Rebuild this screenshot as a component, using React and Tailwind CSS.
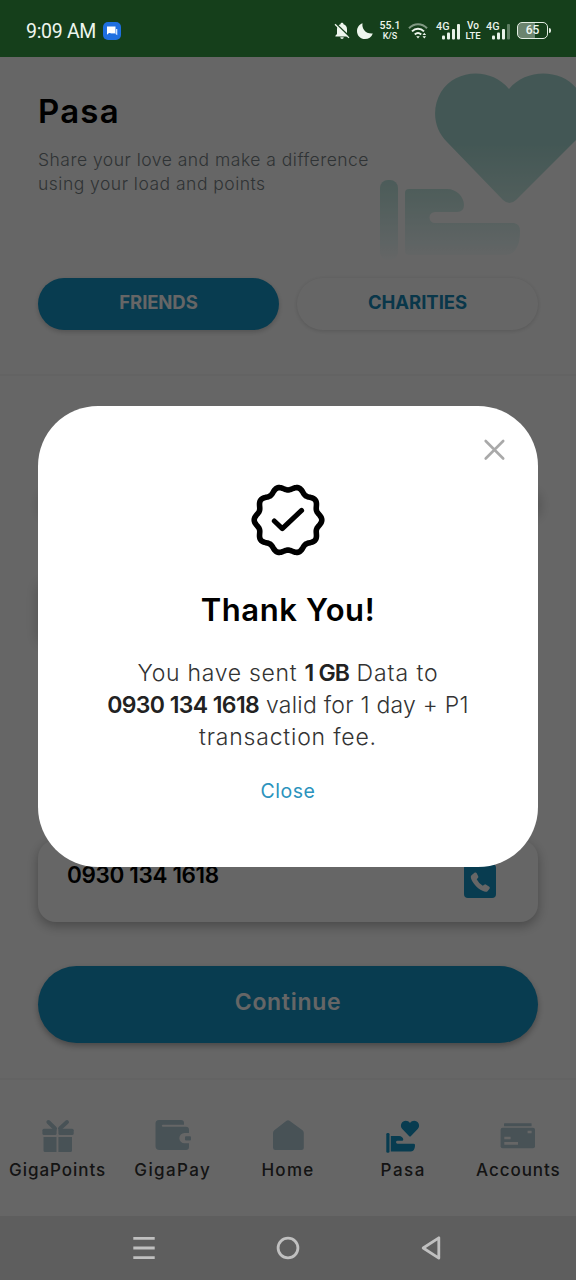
import React from 'react';

// Sceau dentelé à dix lobes autour de la coche
const sealPoints = Array.from({ length: 180 }, (_, i) => {
    const a = (i / 180) * Math.PI * 2;
    const r = 31.9 + 1.9 * Math.cos(10 * a);
    return `${(38 + r * Math.cos(a)).toFixed(2)},${(38 + r * Math.sin(a)).toFixed(2)}`;
}).join(' ');

const SealIcon = () => (
    <svg viewBox="0 0 76 76" className="w-[76px] h-[76px]" fill="none" stroke="#000" strokeLinecap="round" strokeLinejoin="round">
        <polygon points={sealPoints} strokeWidth="5.6" />
        <path d="M24.3 39L32.3 46.6L51.6 28.4" strokeWidth="5" />
    </svg>
);

const Signal = ({ weak }) => (
    <svg viewBox="0 0 24 20" className="w-6 h-5 overflow-visible" fill="#e9f3e9">
        <text x="-1" y="9" fontSize="11" fontWeight="500" fontFamily="Roboto, sans-serif" textLength="13.5" lengthAdjust="spacingAndGlyphs">4G</text>
        <rect x="5" y="14.5" width="3" height="4" rx="1" />
        <rect x="10" y="11.5" width="3" height="7" rx="1" />
        <rect x="15" y="8" width="3" height="10.5" rx="1" />
        <rect x="20" y="3" width="3" height="15.5" rx="1" opacity={weak ? 0.35 : 1} />
    </svg>
);

const StatusBar = () => (
    <div className="h-[57px] shrink-0 bg-[#153f1b] text-[#eef6ee] font-[Roboto,sans-serif] flex items-center justify-between pl-[26px] pr-[25px] pt-1">
        <div className="flex items-center gap-[7px]">
            <span className="text-[19.5px] leading-6 tracking-[-0.3px] pt-[2px]">9:09 AM</span>
            <svg viewBox="0 0 18 18" className="w-[18px] h-[18px]">
                <rect width="18" height="18" rx="5" fill="#1f6fe0" />
                <path d="M4 4.5H12.5V11H6L4 12.7Z" fill="#fff" />
                <path d="M13 7H14.3V13.3L12.5 12H7.5V11.4H13Z" fill="#d6e6ff" />
            </svg>
        </div>
        <div className="flex items-center">
            <svg viewBox="0 0 16 18" className="w-4 h-[18px]" fill="#eef6ee">
                <path d="M8 .8c.9 0 1.5.6 1.5 1.4C12 3 13 4.8 13 7.3V12l1.6 1.8V14.5H1.4V13.8L3 12V7.3C3 4.8 4 3 6.5 2.2C6.5 1.4 7.1.8 8 .8Z" />
                <path d="M6.3 15.3H9.7C9.7 17.5 6.3 17.5 6.3 15.3Z" />
                <path d="M1.8 1.5L15.8 15" stroke="#153f1b" strokeWidth="1.6" />
                <path d="M1 2.2L15 15.9" stroke="#eef6ee" strokeWidth="1.3" />
            </svg>
            <svg viewBox="0 0 18 18" className="w-[18px] h-[18px] ml-[6px]" fill="#eef6ee">
                <path d="M6.5 1.2C5.6 6.8 9.5 12 16.8 11.4C15.5 15 12.5 17 9 17C4.5 17 1 13.6 1 9.2C1 5.5 3.2 2.3 6.5 1.2Z" />
            </svg>
            <div className="ml-[5px] mr-[2px] w-[22px] text-center font-medium">
                <div className="text-[10.5px] leading-[10px]">55.1</div>
                <div className="text-[9px] leading-[10px]">K/S</div>
            </div>
            <svg viewBox="0 0 20 18" className="w-5 h-[18px] ml-[5px]" fill="none" stroke="#eef6ee" strokeWidth="2">
                <path d="M1 6.3C6.2.9 13.8.9 19 6.3" opacity="0.5" />
                <path d="M4 9.4C7.5 6 12.5 6 16 9.4" />
                <path d="M6.8 12.5C8.7 10.7 11.3 10.7 13.2 12.5" />
                <path d="M8.2 14.3H11.8L10 16.5Z" fill="#eef6ee" stroke="none" />
                <path d="M14.5 13L16.3 10.8L18.1 13ZM14.5 14.3L16.3 16.5L18.1 14.3Z" fill="#eef6ee" stroke="none" />
            </svg>
            <div className="ml-[9px]"><Signal /></div>
            <div className="ml-[3px] w-[18px] text-center font-medium">
                <div className="text-[10px] leading-[11px]">Vo</div>
                <div className="text-[9.5px] leading-[10px]">LTE</div>
            </div>
            <div className="ml-[5px]"><Signal weak /></div>
            <div className="ml-[6px] flex items-center">
                <div className="w-[31px] h-[17px] rounded-[5px] border-[1.5px] border-[#e3eee3] bg-linear-to-r from-[#6b846e] from-60% to-[#153f1b] to-60% text-[12px] leading-[14.5px] font-medium text-center">65</div>
                <div className="w-[2px] h-[5px] ml-px bg-[#e3eee3] rounded-r" />
            </div>
        </div>
    </div>
);

const HeartHand = () => (
    <svg viewBox="376 57 200 220" className="w-[200px] h-[220px] shrink-0" fill="url(#fade)">
        <defs>
            <linearGradient id="fade" gradientUnits="userSpaceOnUse" x1="0" y1="145" x2="0" y2="262">
                <stop offset="0" stopColor="#a9dad4" />
                <stop offset="0.45" stopColor="#c9ebe5" />
                <stop offset="0.85" stopColor="#edfafa" />
                <stop offset="1" stopColor="#ffffff" />
            </linearGradient>
        </defs>
        <path d="M509 89C491 67 455 69 441 92C431 109 434 129 447 142L503 200Q509.5 206 516 200L574 142C588 128 591 109 579 92C565 69 527 67 509 89Z" />
        <rect x="380" y="180" width="18" height="80" rx="8" />
        <path d="M405 193Q405 189 409 189H447C457 189 464 197 464 205Q464 212 457 212H435A5.5 5.5 0 0 0 435 223H514Q520 224 520 231C520 246 515 255 505 255H409Q405 255 405 251Z" />
    </svg>
);

const tabs = [
    {
        label: 'GigaPoints',
        spacing: 'tracking-[0.95px]',
        icon: (
            <g fill="#b3ccd8">
                <path d="M8.4 4L15 10.5M27 4L20 10.5" stroke="#b3ccd8" strokeWidth="4" strokeLinecap="round" />
                <rect x="2.4" y="10.7" width="14.2" height="6.3" rx="1.5" />
                <rect x="18.4" y="10.7" width="15.3" height="6.3" rx="1.5" />
                <path d="M3.5 19H16.5V34H5Q3.5 34 3.5 32.5ZM18.4 19H32V32.5Q32 34 30.5 34H18.4Z" />
            </g>
        ),
    },
    {
        label: 'GigaPay',
        spacing: 'tracking-[1.4px]',
        icon: (
            <g fill="#b3ccd8">
                <path d="M4 2H26Q29 2 29 5V6.7H7.5Q6 7.7 7.5 8.7H31Q34 8.7 34 12V15H29.5A5 5 0 0 0 29.5 25.3H34V29Q34 32 31 32H4.5Q.5 32 .5 28V5.5Q.5 2 4 2Z" />
                <rect x="30" y="18.2" width="6" height="4.4" rx="1" />
            </g>
        ),
    },
    {
        label: 'Home',
        spacing: 'tracking-[1.3px]',
        icon: <path d="M16.5 2.8Q18 1.5 19.5 2.8L32.5 12.2Q33.8 13.2 33.8 15V29.5Q33.8 32 31.3 32H5.3Q3 32 3 29.5V15Q3 13.2 4.3 12.2Z" fill="#b3ccd8" />,
    },
    {
        label: 'Pasa',
        spacing: 'tracking-[1.5px]',
        icon: (
            <g fill="#1496c8">
                <path d="M25 5C22.8 1.8 18 2.3 16.4 5.4C15.5 7.3 15.8 9.3 17.3 10.9L24 18Q25 19 26 18L32.7 10.9C34.2 9.3 34.5 7.3 33.6 5.4C32 2.3 27.2 1.8 25 5Z" />
                <rect x="1.3" y="15" width="3.2" height="19.7" rx="1.3" />
                <path d="M5.8 18H14C16.5 18 18.3 20 18.3 21.4Q18.3 22.8 17 22.8H12.5A1.3 1.3 0 0 0 12.5 25.7H28.5Q30 25.7 30 27C30 31 28.5 33.4 26 33.4H5.8Z" />
            </g>
        ),
    },
    {
        label: 'Accounts',
        spacing: 'tracking-[0.95px]',
        icon: (
            <g fill="#b3ccd8">
                <rect x="4" y="5.3" width="27.6" height="3" rx="0.5" />
                <rect x="0.6" y="9.7" width="34.4" height="20.5" rx="2" />
                <path d="M27.6 12.7H31.6V15.3H27.6ZM4.3 18.7H10.6V21.3H4.3ZM4.3 24H18V26.7H4.3Z" fill="#fff" />
            </g>
        ),
    },
];

const Header = () => (
    <div className="h-[319px] shrink-0 border-b-2 border-[#f7f7f7]">
        <div className="h-[221px] flex pl-[38px]">
            <div className="w-[338px] shrink-0 pt-[33px]">
                <h1 className="text-[33px] leading-[42px] font-semibold tracking-[1.2px]">Pasa</h1>
                <p className="mt-4 text-[17.5px] leading-6 font-light text-[#777f84] tracking-[0.49px] whitespace-nowrap">
                    Share your love and make a difference
                    <br />
                    using your load and points
                </p>
            </div>
            <HeartHand />
        </div>
        <div className="flex gap-[18px] px-[38px] text-[18.5px] font-bold text-center leading-[49px]">
            <button className="w-[241px] h-[52px] pb-[3px] rounded-full bg-[#1496c8] text-white shadow-[0_2px_5px_rgba(0,0,0,0.2)] tracking-[-0.1px]">FRIENDS</button>
            <button className="w-[241px] h-[52px] pb-[3px] rounded-full bg-white text-[#1889b8] shadow-[0_1px_4px_rgba(0,0,0,0.15)] tracking-[-0.05px]">CHARITIES</button>
        </div>
    </div>
);

const Dialog = () => (
    <div className="relative w-[500px] h-[461px] bg-white rounded-[60px] flex flex-col items-center pt-[76px] text-center">
        <button className="absolute right-[32px] top-[32px]">
            <svg viewBox="0 0 24 24" className="w-6 h-6" stroke="#a9a9a9" strokeWidth="2.6" strokeLinecap="round">
                <path d="M3.7 3L21.2 20.5M21.2 3L3.7 20.5" />
            </svg>
        </button>
        <SealIcon />
        <h2 className="mt-[32px] text-[31px] leading-10 font-semibold text-black tracking-[0.6px]">Thank You!</h2>
        <p className="mt-[27px] text-[23px] leading-8 font-light text-[#333] whitespace-nowrap">
            <span className="tracking-[0.7px]">You have sent </span>
            <b className="font-semibold text-[#222] tracking-[-0.8px]">1 GB</b>
            <span className="tracking-[0.9px]"> Data to</span>
            <br />
            <b className="font-semibold text-[#222] tracking-[-0.6px]">0930 134 1618</b>
            <span className="tracking-[0.25px]"> valid for 1 day + P1</span>
            <br />
            <span className="tracking-[0.8px]">transaction fee.</span>
        </p>
        <button className="mt-[22px] text-[19.5px] leading-8 text-[#2b93bd] tracking-[0.5px]">Close</button>
    </div>
);

const App = () => {
    return (
        <div className="w-[576px] h-[1280px] flex flex-col overflow-hidden font-[Inter,sans-serif] bg-white text-black">
            <StatusBar />
            <div className="relative h-[1159px] flex flex-col">
                <Header />

                {/* Formulaire derrière la fenêtre */}
                <div className="h-[702px] shrink-0 px-[38px] pt-[114px] flex flex-col">
                    <div className="h-[26px] rounded-lg bg-white shadow-[2px_2px_12px_rgba(0,0,0,0.2)]" />
                    <div className="mt-[66px] h-[62px] w-[240px] rounded-lg bg-white shadow-[0_0_14px_rgba(0,0,0,0.2)]" />
                    <div className="mt-[196px] h-[82px] shrink-0 rounded-[18px] bg-white shadow-[0_4px_12px_rgba(0,0,0,0.3)] flex items-end justify-between pl-[29px] pr-[42px] pb-6">
                        <span className="text-[22.5px] leading-[46px] font-semibold tracking-[-0.35px]">0930 134 1618</span>
                        <svg viewBox="0 0 32 34" className="w-8 h-[34px]">
                            <rect width="32" height="34" rx="4" fill="#1496c8" />
                            <path d="M7.5 11.2L10.8 8.6Q12 8 12.7 9.2L14.3 12.5Q14.6 13.5 13.4 14.5L12.7 15.2Q14.8 19.5 18.8 21.7L20.2 20.7Q21.3 20 22.2 20.7L25.3 22.8Q26.3 23.7 25.5 24.7L23.5 27.2Q22 28.5 18.5 26.8C13 24.2 8.5 19 6.9 14Q6.5 12 7.5 11.2Z" fill="#fff" />
                        </svg>
                    </div>
                    <button className="mt-[44px] h-[77px] shrink-0 pb-[5px] rounded-full bg-[#1496c8] text-white text-[23px] font-semibold tracking-[0.7px] shadow-[0_3px_6px_rgba(0,0,0,0.3)]">Continue</button>
                </div>

                {/* Barre d'onglets */}
                <div className="h-[138px] shrink-0 border-t-2 border-[#f7f7f7] grid grid-cols-5 pt-[38px]">
                    {tabs.map((tab) => (
                        <div key={tab.label} className="flex flex-col items-center">
                            <svg viewBox="0 0 36 36" className="w-9 h-9">{tab.icon}</svg>
                            <span className={`mt-1 text-[17px] leading-6 font-medium text-[#333] ${tab.spacing}`}>{tab.label}</span>
                        </div>
                    ))}
                </div>

                {/* Voile sombre et fenêtre de confirmation */}
                <div className="absolute inset-0 bg-black/60 flex flex-col items-center pt-[349px]">
                    <Dialog />
                </div>
            </div>

            <div className="h-16 shrink-0 bg-[#5e5e5e] flex items-center justify-between px-[132px]">
                <svg viewBox="0 0 24 24" className="w-6 h-6" stroke="#c0c0c0" strokeWidth="2.8">
                    <path d="M1.3 2.4H22.7M1.3 12H22.7M1.3 21.6H22.7" />
                </svg>
                <svg viewBox="0 0 24 24" className="w-6 h-6" fill="none" stroke="#c0c0c0" strokeWidth="2.8">
                    <circle cx="12" cy="12" r="9.9" />
                </svg>
                <svg viewBox="0 0 24 24" className="w-6 h-6" fill="none" stroke="#c0c0c0" strokeWidth="2.8" strokeLinejoin="round">
                    <path d="M18.8 1.8V22.2L3.2 12Z" />
                </svg>
            </div>
        </div>
    );
};

export default App;
